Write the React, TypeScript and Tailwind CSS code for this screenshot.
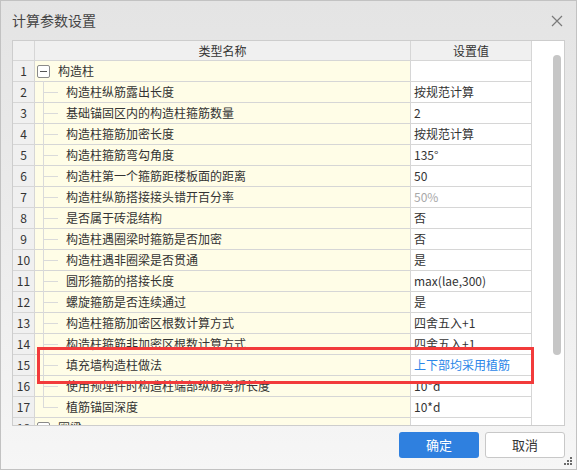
import React from 'react';

interface Row {
    no: number;
    name: string;
    value?: string;
    group?: boolean;
    tone?: 'muted' | 'link';
    last?: boolean;
}

const rows: Row[] = [
    { no: 1, name: '构造柱', value: '', group: true },
    { no: 2, name: '构造柱纵筋露出长度', value: '按规范计算' },
    { no: 3, name: '基础锚固区内的构造柱箍筋数量', value: '2' },
    { no: 4, name: '构造柱箍筋加密长度', value: '按规范计算' },
    { no: 5, name: '构造柱箍筋弯勾角度', value: '135°' },
    { no: 6, name: '构造柱第一个箍筋距楼板面的距离', value: '50' },
    { no: 7, name: '构造柱纵筋搭接接头错开百分率', value: '50%', tone: 'muted' },
    { no: 8, name: '是否属于砖混结构', value: '否' },
    { no: 9, name: '构造柱遇圈梁时箍筋是否加密', value: '否' },
    { no: 10, name: '构造柱遇非圈梁是否贯通', value: '是' },
    { no: 11, name: '圆形箍筋的搭接长度', value: 'max(lae,300)' },
    { no: 12, name: '螺旋箍筋是否连续通过', value: '是' },
    { no: 13, name: '构造柱箍筋加密区根数计算方式', value: '四舍五入+1' },
    { no: 14, name: '构造柱箍筋非加密区根数计算方式', value: '四舍五入+1' },
    { no: 15, name: '填充墙构造柱做法', value: '上下部均采用植筋', tone: 'link' },
    { no: 16, name: '使用预埋件时构造柱端部纵筋弯折长度', value: '10*d' },
    { no: 17, name: '植筋锚固深度', value: '10*d', last: true },
    { no: 18, name: '圈梁', value: '', group: true },
];

const MinusBox = () => (
    <span className="flex h-[13px] w-[13px] items-center justify-center rounded-[2px] border border-[#8a8a8a] bg-white">
        <span className="h-px w-[7px] bg-[#555]" />
    </span>
);

const TableRow: React.FC<{ row: Row }> = ({ row }) => (
    <div className="flex h-[21px] shrink-0 border-b border-[#d6d6d6]">
        <div className="flex w-[22px] items-center justify-center border-r border-[#d6d6d6] bg-[#f0f0f0]">
            {row.no}
        </div>
        <div className="relative flex w-[376px] items-center border-r border-[#d6d6d6] bg-[#fffde7]">
            {row.group ? (
                <div className="flex items-center pl-[2px]">
                    <MinusBox />
                    <span className="ml-[8px]">{row.name}</span>
                </div>
            ) : (
                <>
                    <span
                        className={`absolute left-[8px] top-[-1px] w-px bg-[#dadada] ${row.last ? 'h-[11px]' : 'h-[22px]'}`}
                    />
                    <span className="absolute left-[8px] top-[10px] h-px w-[15px] bg-[#dadada]" />
                    <span className="pl-[31px]">{row.name}</span>
                </>
            )}
        </div>
        <div
            className={`flex w-[121px] items-center border-r border-[#d6d6d6] bg-white pl-[3px] ${
                row.tone === 'muted' ? 'text-[#a8a8a8]' : row.tone === 'link' ? 'text-[#2b86e8]' : ''
            }`}
        >
            {row.value}
        </div>
    </div>
);

export default function App() {
    return (
        <div
            className="relative flex h-[470px] w-[577px] flex-col overflow-hidden border border-[#c2c2c2] bg-gradient-to-b from-[#e4e4e4] via-[#ececec] to-[#f6f6f6] text-[12px] text-[#333]"
            style={{ fontFamily: '"Noto Sans CJK SC", "Noto Sans", sans-serif' }}
        >
            <div className="flex h-[39px] shrink-0 items-center justify-between pl-[11px] pr-[13px]">
                <span className="text-[14px] text-[#444]">计算参数设置</span>
                <svg width="12" height="12" viewBox="0 0 12 12" className="text-[#7a7a7a]">
                    <path d="M1 1 L11 11 M11 1 L1 11" stroke="currentColor" strokeWidth="1.2" />
                </svg>
            </div>

            <div className="ml-[11px] flex h-[386px] w-[553px] shrink-0 overflow-hidden border border-[#cdcdcd] bg-white">
                <div className="flex w-[519px] flex-col">
                    <div className="flex h-[20px] shrink-0 border-b border-[#d6d6d6] bg-[#f0f0f0]">
                        <div className="w-[22px] border-r border-[#d6d6d6]" />
                        <div className="flex w-[376px] items-center justify-center border-r border-[#d6d6d6]">
                            类型名称
                        </div>
                        <div className="flex w-[121px] items-center justify-center border-r border-[#d6d6d6]">
                            设置值
                        </div>
                    </div>
                    {rows.map((row) => (
                        <TableRow key={row.no} row={row} />
                    ))}
                </div>
                <div className="relative flex-1">
                    <div className="absolute left-[21px] top-[14px] h-[300px] w-[8px] rounded-full bg-[#c6c6c6]" />
                </div>
            </div>

            <div className="mr-[11px] mt-[6px] flex justify-end gap-[6px]">
                <button className="h-[26px] w-[80px] rounded-[3px] bg-[#2f80df] text-[13px] text-white">确定</button>
                <button className="h-[26px] w-[80px] rounded-[3px] border border-[#c8c8c8] bg-white text-[13px] text-[#333]">
                    取消
                </button>
            </div>

            {/* highlight frame drawn over row 15 */}
            <div className="pointer-events-none absolute left-[36px] top-[346px] h-[37px] w-[497px] border-[3px] border-[#f23b3b]" />

            <svg width="9" height="9" viewBox="0 0 9 9" className="absolute bottom-[3px] right-[3px]">
                <rect x="6" y="0" width="2" height="2" fill="#6b6b6b" />
                <rect x="3" y="3" width="2" height="2" fill="#6b6b6b" />
                <rect x="6" y="3" width="2" height="2" fill="#6b6b6b" />
                <rect x="0" y="6" width="2" height="2" fill="#6b6b6b" />
                <rect x="3" y="6" width="2" height="2" fill="#6b6b6b" />
                <rect x="6" y="6" width="2" height="2" fill="#6b6b6b" />
            </svg>
        </div>
    );
}
